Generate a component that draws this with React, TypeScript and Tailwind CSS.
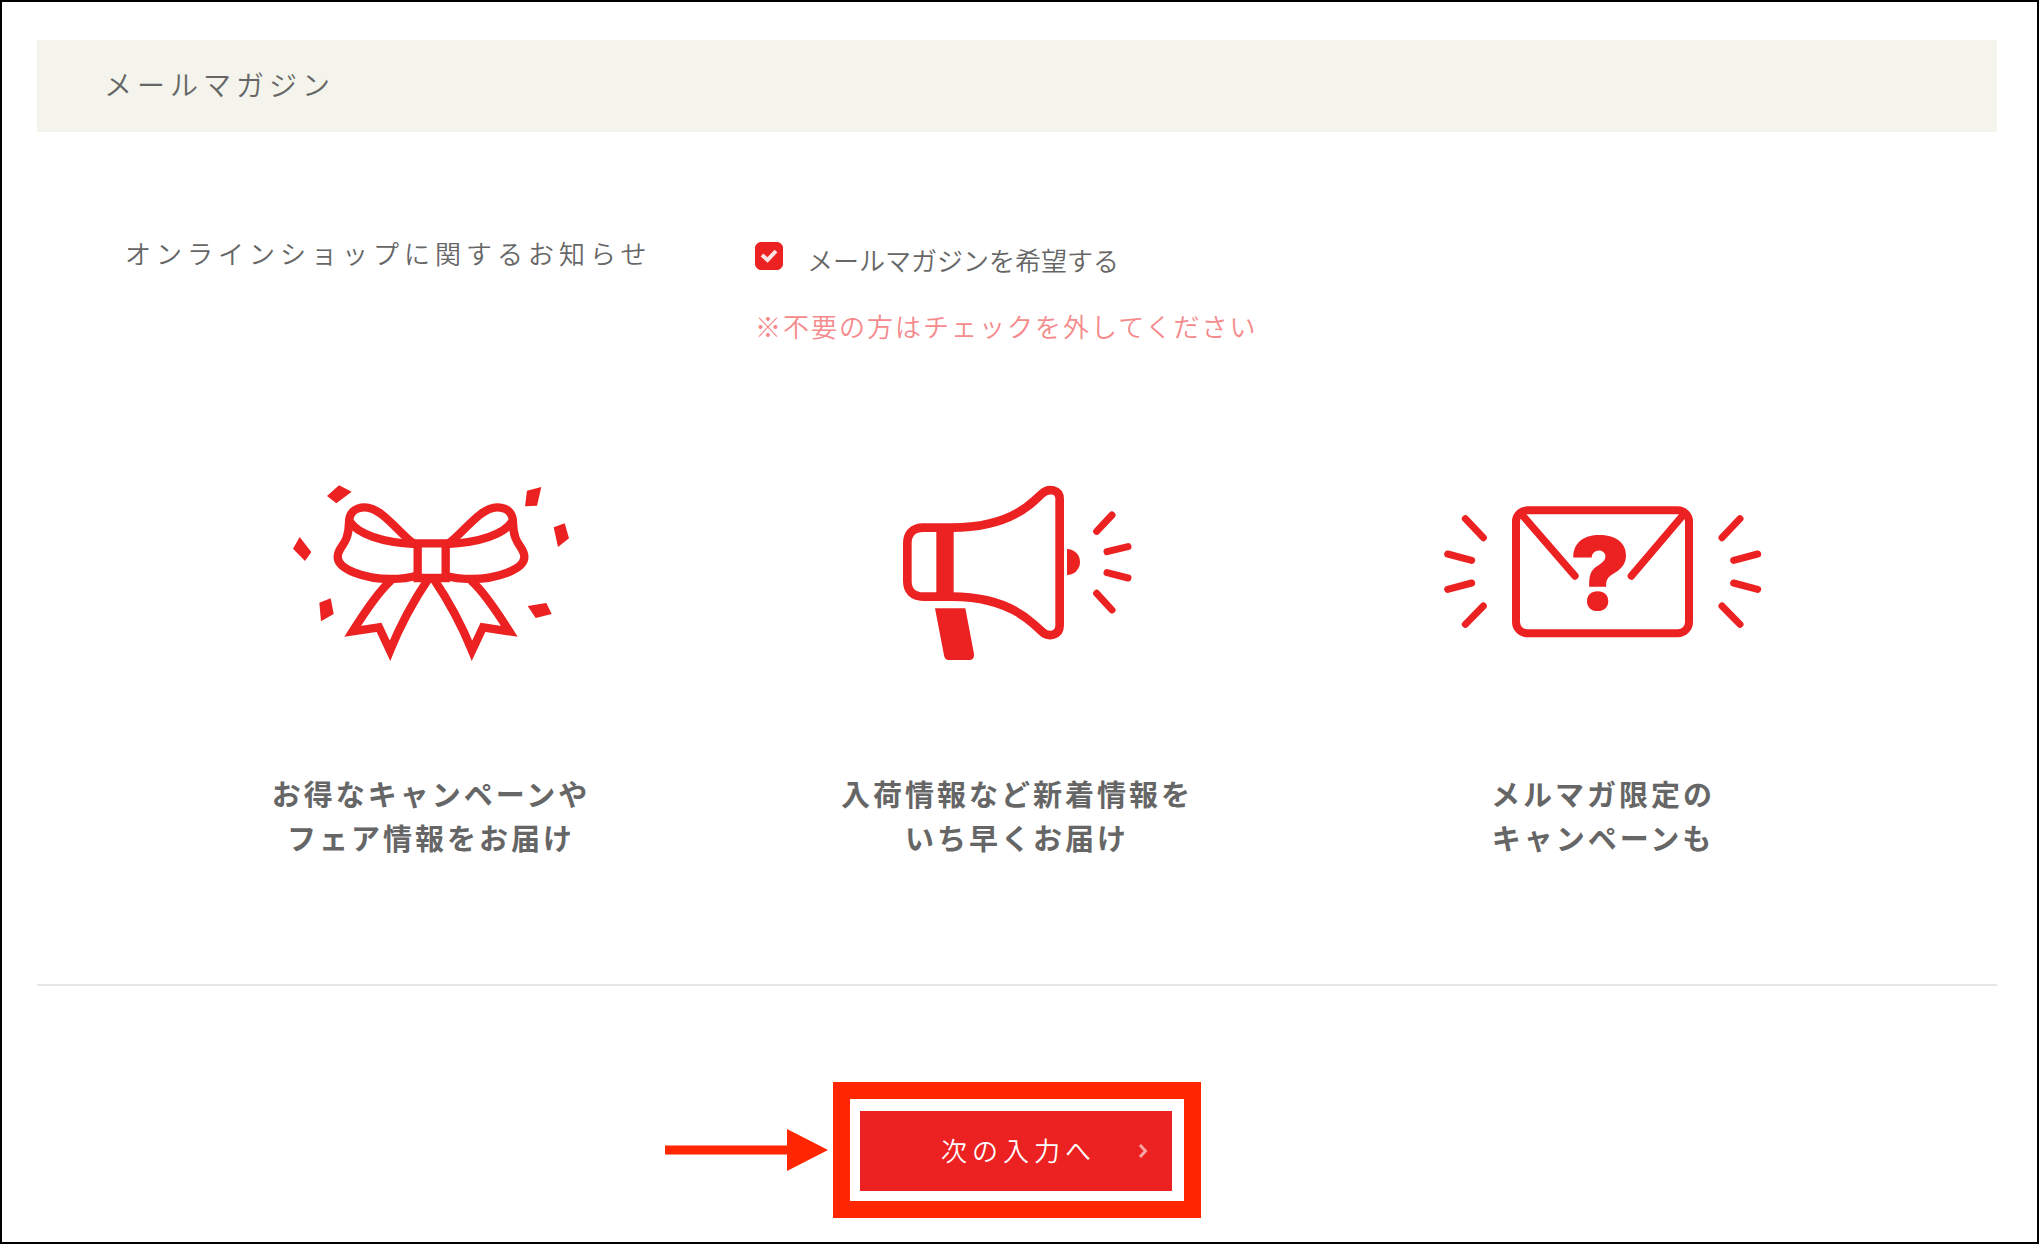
import React, { useState } from "react";

interface BenefitProps {
  icon: React.ReactNode;
  lines: string[];
}

const BowIcon = () => (
  <svg
    viewBox="-57 0 1080 660"
    className="w-[360px] h-[220px]"
    fill="none"
    stroke="#eb2122"
    strokeWidth="25"
    aria-hidden="true">
    <path d="M443 247h84v104h-84z" />
    <path d="M432 249C385 215 335 139 285 139C252 139 237 158 237 185C236 255 203 255 203 288C203 325 285 354 361 354C395 354 422 350 440 344" />
    <path d="M240 182C262 218 335 245 437 249" />
    <path d="M534 249C581 215 631 139 681 139C714 139 729 158 729 185C730 255 763 255 763 288C763 325 681 354 605 354C571 354 544 350 526 344" />
    <path d="M726 182C704 218 631 245 529 249" />
    <path d="M363 358C325 392 280 460 248 511L327 499L360 569C395 482 430 420 476 352" />
    <path d="M603 358C641 392 686 460 718 511L639 499L606 569C571 482 536 420 490 352" />
    <g fill="#eb2122" stroke="none">
      <path d="M171 105L207 73L245 92L199 127z" />
      <path d="M89 228L124 273L105 300L69 263z" />
      <path d="M148 425L182 412L191 459L153 481z" />
      <path d="M771 89L814 78L801 134L765 136z" />
      <path d="M851 199L884 187L897 232L864 258z" />
      <path d="M773 435L829 426L845 459L797 471z" />
    </g>
  </svg>
);

const MegaphoneIcon = () => (
  <svg
    viewBox="-129 0 1080 660"
    className="w-[360px] h-[220px]"
    fill="none"
    stroke="#eb2122"
    strokeWidth="26"
    aria-hidden="true">
    <path d="M130 200H215C320 200 405 172 462 120L486 98C505 80 539 84 539 115V493C539 524 505 530 486 512L462 490C405 438 320 407 215 407H130C97 407 82 388 82 360V247C82 219 97 200 130 200z" />
    <path d="M195 200V407" strokeWidth="52" />
    <path
      d="M165 442H256L282 578Q283 597 268 597H206Q194 597 192 583z"
      fill="#eb2122"
      stroke="none"
    />
    <path d="M561 264A39 39 0 0 1 561 342z" fill="#eb2122" stroke="none" />
    <path
      d="M650 211L696 162M681 272L744 257M681 335L744 351M650 397L696 447"
      strokeWidth="21"
      strokeLinecap="round"
    />
  </svg>
);

const EnvelopeIcon = () => (
  <svg
    viewBox="9 -60 1080 660"
    className="w-[360px] h-[220px]"
    fill="none"
    stroke="#eb2122"
    strokeWidth="24"
    aria-hidden="true">
    <rect x="288" y="88" width="519" height="369" rx="34" />
    <path
      d="M303 98L465 285M793 98L634 285"
      strokeWidth="22"
      strokeLinecap="round"
    />
    <path
      d="M136 113L190 170M83 219L155 238M83 325L155 306M136 430L190 375M960 113L906 170M1013 219L941 238M1013 325L941 306M960 430L906 375"
      strokeWidth="21"
      strokeLinecap="round"
    />
    <text
      x="540"
      y="388"
      textAnchor="middle"
      fill="#eb2122"
      stroke="none"
      fontSize="305"
      className="font-[Inter,sans-serif] font-black">
      ?
    </text>
  </svg>
);

const Benefit = ({ icon, lines }: BenefitProps) => (
  <li className="flex flex-col items-center gap-[90px]">
    {icon}
    <p className="text-center text-[29px] leading-[44px] tracking-[3px] font-bold">
      {lines.map(line => (
        <span key={line} className="block">
          {line}
        </span>
      ))}
    </p>
  </li>
);

const benefits: BenefitProps[] = [
  { icon: <BowIcon />, lines: ["お得なキャンペーンや", "フェア情報をお届け"] },
  {
    icon: <MegaphoneIcon />,
    lines: ["入荷情報など新着情報を", "いち早くお届け"],
  },
  { icon: <EnvelopeIcon />, lines: ["メルマガ限定の", "キャンペーンも"] },
];

const NewsletterField = () => {
  const [subscribed, setSubscribed] = useState(true);

  return (
    <div className="flex pt-[101px] pl-[88px]">
      <p className="w-[630px] shrink-0 text-[26px] leading-10 tracking-[5px]">
        オンラインショップに関するお知らせ
      </p>
      <div className="pt-[9px]">
        <label className="flex items-start gap-6">
          <span className="relative size-7 shrink-0">
            <input
              type="checkbox"
              checked={subscribed}
              onChange={e => setSubscribed(e.target.checked)}
              className="block size-7 appearance-none rounded-md border border-[#eb2122] checked:bg-[#eb2122]"
            />
            {subscribed && (
              <svg
                viewBox="0 0 28 28"
                className="absolute inset-0 pointer-events-none"
                fill="none"
                stroke="#fde3e3"
                strokeWidth="4"
                aria-hidden="true">
                <path d="M7 13l5.500 5L21 9" />
              </svg>
            )}
          </span>
          <span className="text-[26px] leading-9">
            メールマガジンを希望する
          </span>
        </label>
        <p className="mt-7 text-[26px] leading-10 tracking-[2px] text-[#f58a8c]">
          ※不要の方はチェックを外してください
        </p>
      </div>
    </div>
  );
};

const NextButton = () => (
  <div className="relative border-[17px] border-[#ff2600] pt-3 pr-3 pb-[10px] pl-[10px]">
    <svg
      viewBox="0 0 163 42"
      className="absolute right-full top-1/2 -translate-y-1/2 mr-[22px] w-[163px] h-[42px]"
      fill="#ff2600"
      aria-hidden="true">
      <path d="M0 16.500H122V0L163 21L122 42V25.500H0z" />
    </svg>
    <button
      type="button"
      className="relative block w-[312px] h-20 pl-[5px] pb-1 bg-[#eb2122] text-white text-[26px] tracking-[5px]">
      次の入力へ
      <svg
        viewBox="0 0 10 16"
        className="absolute right-6 top-1/2 -translate-y-1/2 w-[10px] h-4"
        fill="none"
        stroke="#f7a6a6"
        strokeWidth="3"
        aria-hidden="true">
        <path d="M2 2L7.500 8L2 14" />
      </svg>
    </button>
  </div>
);

export default function App() {
  return (
    <main className="min-h-screen border-2 border-black bg-white pt-[38px] pr-10 pb-6 pl-[35px] font-['Noto_Sans_CJK_JP',sans-serif] font-[350] text-[#666]">
      <h2 className="bg-[#f4f4ec] pt-[22px] pb-[26px] pl-[67px] text-[28px] leading-[44px] tracking-[5px]">
        メールマガジン
      </h2>
      <NewsletterField />
      <ul className="mt-[115px] px-[101px] grid grid-cols-3">
        {benefits.map(benefit => (
          <Benefit key={benefit.lines[0]} {...benefit} />
        ))}
      </ul>
      <hr className="mt-[125px] border-t-2 border-[#e5e5e5]" />
      <div className="mt-24 flex justify-center">
        <NextButton />
      </div>
    </main>
  );
}
